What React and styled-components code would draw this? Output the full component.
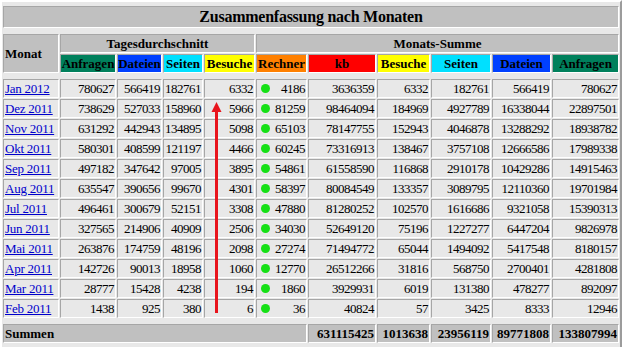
import React from 'react';
import styled, { createGlobalStyle, css } from 'styled-components';

const Global = createGlobalStyle`
  html, body { margin: 0; padding: 0; background: #e8e8e8; overflow: hidden; }
  body { font-family: "Liberation Serif", "Times New Roman", serif; }
`;

const Page = styled.div`
  position: relative;
  width: 622px;
`;

const Table = styled.table`
  width: 622px;
  table-layout: fixed;
  border-collapse: separate;
  border-spacing: 1px;
  border: 2px solid;
  border-color: #ffffff #9c9c9c #9c9c9c #ffffff;
  background: #e8e8e8;
  font-family: "Liberation Serif", "Times New Roman", serif;
  font-size: 13px;
  color: #000;
`;

const Col = styled.col`
  width: ${(p) => p.$w}px;
`;

const Spacer = styled.td`
  height: ${(p) => p.$h}px;
  padding: 0;
  border: 0;
`;

const inset = css`
  border: 1px solid;
  border-color: #a6a6a6 #ffffff #ffffff #a6a6a6;
`;

const Title = styled.th`
  ${inset};
  background: #c0c0c0;
  font-size: 16px;
  letter-spacing: -0.25px;
  line-height: 18px;
  padding: 1px;
  text-align: center;
  white-space: nowrap;
`;

const GroupHead = styled.th`
  ${inset};
  background: #c0c0c0;
  text-align: ${(p) => p.$align || 'center'};
  line-height: 15px;
  padding: 1px;
  white-space: nowrap;
  vertical-align: middle;
`;

const MetricHead = styled.th`
  ${inset};
  background: ${(p) => p.$bg};
  text-align: center;
  line-height: 15px;
  padding: 1px 0;
  white-space: nowrap;
`;

const Cell = styled.td`
  ${inset};
  text-align: right;
  padding: 1px;
  line-height: 15px;
  letter-spacing: -0.5px;
  white-space: nowrap;
`;

const MonthCell = styled(Cell)`
  text-align: left;
  letter-spacing: -0.25px;
`;

const MonthLink = styled.a`
  color: #0000cc;
  text-decoration: underline;
`;

const HostCell = styled(Cell)`
  position: relative;
`;

const Dot = styled.span`
  position: absolute;
  left: 4px;
  top: 50%;
  width: 9px;
  height: 9px;
  margin-top: -4.5px;
  border-radius: 50%;
  background: #16e016;
`;

const TotalHead = styled.th`
  ${inset};
  background: #c0c0c0;
  text-align: ${(p) => p.$align || 'right'};
  line-height: 15px;
  padding: 1px;
  white-space: nowrap;
`;

const Overlay = styled.svg`
  position: absolute;
  left: 0;
  top: 0;
  pointer-events: none;
`;

const COLORS = {
  hits: '#00805c',
  files: '#0040ff',
  pages: '#00e0ff',
  visits: '#ffff00',
  sites: '#ff8000',
  kb: '#ff0000',
};

const rows = [
  ['Jan 2012', 780627, 566419, 182761, 6332, 4186, 3636359, 6332, 182761, 566419, 780627],
  ['Dez 2011', 738629, 527033, 158960, 5966, 81259, 98464094, 184969, 4927789, 16338044, 22897501],
  ['Nov 2011', 631292, 442943, 134895, 5098, 65103, 78147755, 152943, 4046878, 13288292, 18938782],
  ['Okt 2011', 580301, 408599, 121197, 4466, 60245, 73316913, 138467, 3757108, 12666586, 17989338],
  ['Sep 2011', 497182, 347642, 97005, 3895, 54861, 61558590, 116868, 2910178, 10429286, 14915463],
  ['Aug 2011', 635547, 390656, 99670, 4301, 58397, 80084549, 133357, 3089795, 12110360, 19701984],
  ['Jul 2011', 496461, 300679, 52151, 3308, 47880, 81280252, 102570, 1616686, 9321058, 15390313],
  ['Jun 2011', 327565, 214906, 40909, 2506, 34030, 52649120, 75196, 1227277, 6447204, 9826978],
  ['Mai 2011', 263876, 174759, 48196, 2098, 27274, 71494772, 65044, 1494092, 5417548, 8180157],
  ['Apr 2011', 142726, 90013, 18958, 1060, 12770, 26512266, 31816, 568750, 2700401, 4281808],
  ['Mar 2011', 28777, 15428, 4238, 194, 1860, 3929931, 6019, 131380, 478277, 892097],
  ['Feb 2011', 1438, 925, 380, 6, 36, 40824, 57, 3425, 8333, 12946],
];

const totals = [631115425, 1013638, 23956119, 89771808, 133807994];

const widths = [56, 56, 45, 40, 51, 51, 68, 53, 60, 59, 67];

export default function App() {
  return (
    <Page>
      <Global />
      <Table>
        <colgroup>
          {widths.map((w, i) => (
            <Col key={i} $w={w} />
          ))}
        </colgroup>
        <tbody>
          <tr><Spacer colSpan={11} $h={2} /></tr>
          <tr>
            <Title colSpan={11}>Zusammenfassung nach Monaten</Title>
          </tr>
          <tr><Spacer colSpan={11} $h={4} /></tr>
          <tr>
            <GroupHead rowSpan={2} $align="left">Monat</GroupHead>
            <GroupHead colSpan={4}>Tagesdurchschnitt</GroupHead>
            <GroupHead colSpan={6}>Monats-Summe</GroupHead>
          </tr>
          <tr>
            <MetricHead $bg={COLORS.hits}>Anfragen</MetricHead>
            <MetricHead $bg={COLORS.files}>Dateien</MetricHead>
            <MetricHead $bg={COLORS.pages}>Seiten</MetricHead>
            <MetricHead $bg={COLORS.visits}>Besuche</MetricHead>
            <MetricHead $bg={COLORS.sites}>Rechner</MetricHead>
            <MetricHead $bg={COLORS.kb}>kb</MetricHead>
            <MetricHead $bg={COLORS.visits}>Besuche</MetricHead>
            <MetricHead $bg={COLORS.pages}>Seiten</MetricHead>
            <MetricHead $bg={COLORS.files}>Dateien</MetricHead>
            <MetricHead $bg={COLORS.hits}>Anfragen</MetricHead>
          </tr>
          <tr><Spacer colSpan={11} $h={4} /></tr>
          {rows.map((r) => (
            <tr key={r[0]}>
              <MonthCell>
                <MonthLink href="#">{r[0]}</MonthLink>
              </MonthCell>
              <Cell>{r[1]}</Cell>
              <Cell>{r[2]}</Cell>
              <Cell>{r[3]}</Cell>
              <Cell>{r[4]}</Cell>
              <HostCell>
                <Dot />
                {r[5]}
              </HostCell>
              <Cell>{r[6]}</Cell>
              <Cell>{r[7]}</Cell>
              <Cell>{r[8]}</Cell>
              <Cell>{r[9]}</Cell>
              <Cell>{r[10]}</Cell>
            </tr>
          ))}
          <tr><Spacer colSpan={11} $h={4} /></tr>
          <tr>
            <TotalHead colSpan={6} $align="left">Summen</TotalHead>
            {totals.map((t, i) => (
              <TotalHead key={i}>{t}</TotalHead>
            ))}
          </tr>
          <tr><Spacer colSpan={11} $h={4} /></tr>
        </tbody>
      </Table>
      <Overlay width="622" height="347" viewBox="0 0 622 347">
        <polygon points="216.5,102 211.5,112 221.5,112" fill="#e8141c" />
        <rect x="215" y="111" width="3" height="202" fill="#e8141c" />
      </Overlay>
    </Page>
  );
}
